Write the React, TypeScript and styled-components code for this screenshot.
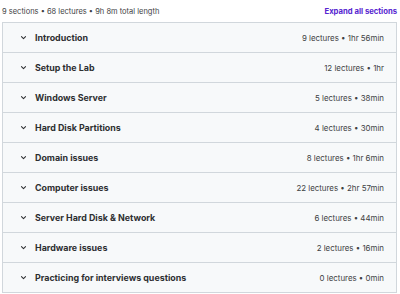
import React from "react";
import styled, { createGlobalStyle } from "styled-components";

const Global = createGlobalStyle`
  html, body { margin: 0; padding: 0; background: #ffffff; }
  body { font-family: Inter, "Noto Sans", sans-serif; color: #2d2f31; }
`;

const Page = styled.div`
  width: 400px;
  height: 294px;
  box-sizing: border-box;
  padding: 4px 3px 0 2px;
  display: flex;
  flex-direction: column;
`;

const TopBar = styled.div`
  display: flex;
  justify-content: space-between;
  align-items: center;
  height: 15px;
  margin-bottom: 3px;
`;

const Summary = styled.span`
  font-size: 7.5px;
  color: #3e4143;
`;

const ExpandLink = styled.span`
  font-size: 7.7px;
  font-weight: 700;
  color: #5624d0;
`;

const List = styled.div`
  border: 1px solid #d1d7dc;
  display: flex;
  flex-direction: column;
`;

const Row = styled.div<{ $last?: boolean }>`
  height: 29px;
  box-sizing: content-box;
  background: #f7f9fa;
  border-bottom: ${(p) => (p.$last ? "none" : "1px solid #d1d7dc")};
  display: flex;
  align-items: center;
  padding: 0 12px 0 17px;
`;

const Chevron = styled.svg`
  width: 7px;
  height: 7px;
  flex: none;
  margin-right: 8px;
`;

const Title = styled.span`
  flex: 1;
  font-size: 8.9px;
  font-weight: 700;
  color: #2d2f31;
`;

const Meta = styled.span`
  font-size: 7.9px;
  color: #3e4143;
`;

const sections = [
  ["Introduction", "9 lectures • 1hr 56min"],
  ["Setup the Lab", "12 lectures • 1hr"],
  ["Windows Server", "5 lectures • 38min"],
  ["Hard Disk Partitions", "4 lectures • 30min"],
  ["Domain issues", "8 lectures • 1hr 6min"],
  ["Computer issues", "22 lectures • 2hr 57min"],
  ["Server Hard Disk & Network", "6 lectures • 44min"],
  ["Hardware issues", "2 lectures • 16min"],
  ["Practicing for interviews questions", "0 lectures • 0min"],
];

export default function App() {
  return (
    <>
      <Global />
      <Page>
        <TopBar>
          <Summary>9 sections • 68 lectures • 9h 8m total length</Summary>
          <ExpandLink>Expand all sections</ExpandLink>
        </TopBar>
        <List>
          {sections.map(([t, m], i) => (
            <Row key={t} $last={i === sections.length - 1}>
              <Chevron viewBox="0 0 24 24" fill="none" stroke="#2d2f31" strokeWidth="3.5" strokeLinecap="round" strokeLinejoin="round">
                <path d="M5 9l7 7 7-7" />
              </Chevron>
              <Title>{t}</Title>
              <Meta>{m}</Meta>
            </Row>
          ))}
        </List>
      </Page>
    </>
  );
}
